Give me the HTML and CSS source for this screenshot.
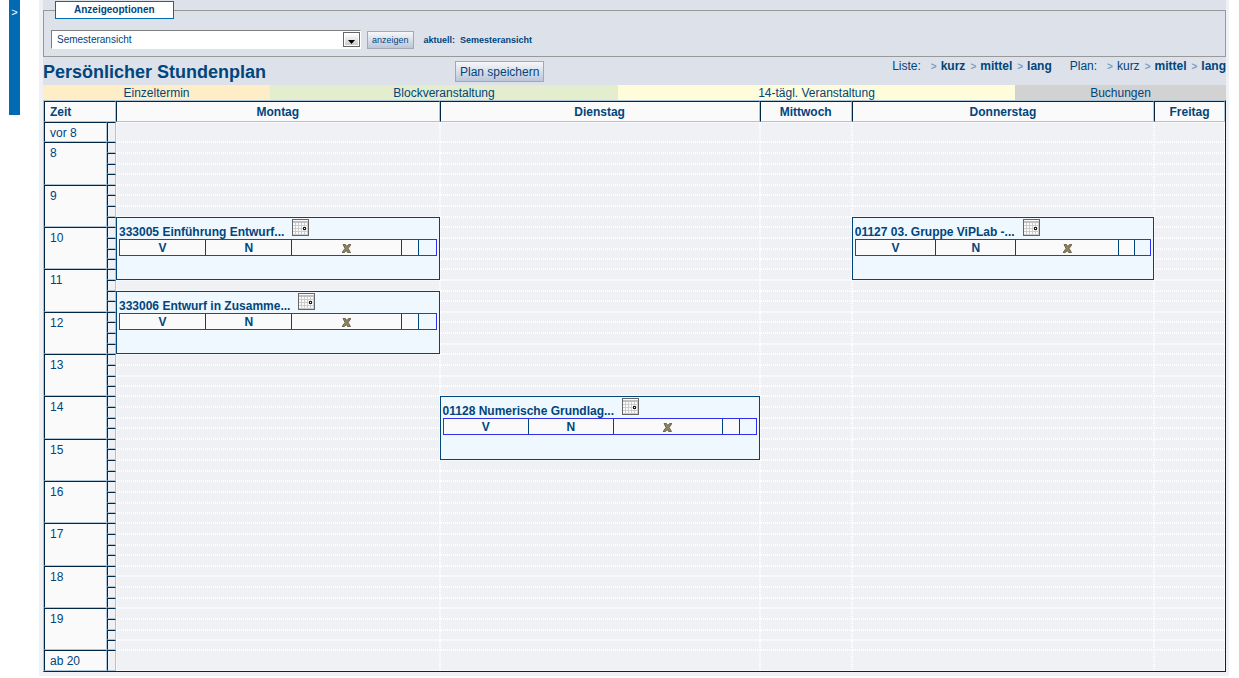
FILE: index.html
```
<!DOCTYPE html>
<html lang="de">
<head>
<meta charset="utf-8">
<title>Persönlicher Stundenplan</title>
<link rel="stylesheet" href="styles.css">
</head>
<body>
<svg class="defs" aria-hidden="true">
<symbol id="cal" viewBox="0 0 17 17"><rect x=".5" y=".5" width="16" height="16" fill="#fafafa" stroke="#666"/><path d="M1 3h15" stroke="#8c8488"/><path d="M3.500 4v12M6.500 4v12M9.500 4v12M12.500 4v12M15.500 4v12M1 6.500h15M1 9.500h15M1 12.500h15M1 15.500h15" stroke="#ccc"/><rect x="11.500" y="8.500" width="2" height="2" fill="#fff" stroke="#222"/></symbol>
<symbol id="del" viewBox="0 0 9 9"><path d="M1 .5h2.500l1.300 2L6.500 .5H9L6.200 4.500 8.500 8.500H5.500L4.300 6.500 2.500 8.500H0L3 4.500z" fill="#8f8462" stroke="#5c553f" stroke-width=".8"/></symbol>
</svg>
<div class="page">
<button class="sidebar" type="button" aria-label="Menü einblenden">&gt;</button>
<main class="content">
<div class="panel">
<form>
<fieldset class="options">
<legend>Anzeigeoptionen</legend>
<div class="options-row">
<span class="select"><select aria-label="Ansicht"><option>Semesteransicht</option></select><svg class="arrow" viewBox="0 0 17 15" aria-hidden="true"><defs><linearGradient id="g" x2="0" y2="1"><stop stop-color="#fff"/><stop offset="1" stop-color="#ccc"/></linearGradient></defs><rect x=".5" y=".5" width="16" height="14" fill="#fff" stroke="#666"/><rect x="2" y="2" width="13" height="11" fill="url(#g)"/><path d="M5 8h7l-3.500 4z" fill="#000"/></svg></span>
<button class="btn small" type="button">anzeigen</button>
<strong class="current">aktuell: &nbsp;Semesteransicht</strong>
</div>
</fieldset>
</form>
<div class="titlebar">
<h1>Persönlicher Stundenplan</h1>
<div><button class="btn" type="button">Plan speichern</button></div>
<nav class="views">
<div class="view-group"><span class="view-label">Liste:</span><a class="on" href="#">kurz</a><a class="on" href="#">mittel</a><a class="on" href="#">lang</a></div>
<div class="view-group"><span class="view-label">Plan:</span><a href="#">kurz</a><a class="on" href="#">mittel</a><a class="on" href="#">lang</a></div>
</nav>
</div>
<ul class="key">
<li class="single">Einzeltermin</li>
<li class="block">Blockveranstaltung</li>
<li class="biweekly">14-tägl. Veranstaltung</li>
<li class="booking">Buchungen</li>
</ul>
</div>
<table class="plan">
<colgroup><col class="c-hour"><col class="c-tick"><col class="c-mo"><col class="c-di"><col class="c-mi"><col class="c-do"><col></colgroup>
<thead><tr><th class="time" colspan="2">Zeit</th><th>Montag</th><th>Dienstag</th><th>Mittwoch</th><th>Donnerstag</th><th>Freitag</th></tr></thead>
<tbody>
<tr class="edge"><th class="hour">vor 8</th><td class="tick"></td><td></td><td></td><td></td><td></td><td></td></tr>
<tr><th class="hour" rowspan="4">8</th><td class="tick"></td><td></td><td></td><td></td><td></td><td></td></tr>
<tr><td class="tick"></td><td></td><td></td><td></td><td></td><td></td></tr>
<tr><td class="tick"></td><td></td><td></td><td></td><td></td><td></td></tr>
<tr><td class="tick"></td><td></td><td></td><td></td><td></td><td></td></tr>
<tr><th class="hour" rowspan="4">9</th><td class="tick"></td><td></td><td></td><td></td><td></td><td></td></tr>
<tr><td class="tick"></td><td></td><td></td><td></td><td></td><td></td></tr>
<tr><td class="tick"></td><td></td><td></td><td></td><td></td><td></td></tr>
<tr><td class="tick"></td>
<td class="event" rowspan="6"><div class="event-title"><a href="#">333005 Einführung Entwurf...</a><svg class="cal"><use href="#cal"/></svg></div><table class="actions"><tr><td><a href="#">V</a></td><td><a href="#">N</a></td><td class="wide"><a href="#" aria-label="Löschen"><svg class="del"><use href="#del"/></svg></a></td><td class="slot"></td><td class="last"></td></tr></table></td>
<td></td><td></td>
<td class="event" rowspan="6"><div class="event-title"><a href="#">01127 03. Gruppe ViPLab -...</a><svg class="cal"><use href="#cal"/></svg></div><table class="actions"><tr><td><a href="#">V</a></td><td><a href="#">N</a></td><td class="wide"><a href="#" aria-label="Löschen"><svg class="del"><use href="#del"/></svg></a></td><td class="slot"></td><td class="last"></td></tr></table></td>
<td></td></tr>
<tr><th class="hour" rowspan="4">10</th><td class="tick"></td><td></td><td></td><td></td></tr>
<tr><td class="tick"></td><td></td><td></td><td></td></tr>
<tr><td class="tick"></td><td></td><td></td><td></td></tr>
<tr><td class="tick"></td><td></td><td></td><td></td></tr>
<tr><th class="hour" rowspan="4">11</th><td class="tick"></td><td></td><td></td><td></td></tr>
<tr><td class="tick"></td><td></td><td></td><td></td><td></td><td></td></tr>
<tr><td class="tick"></td>
<td class="event" rowspan="6"><div class="event-title"><a href="#">333006 Entwurf in Zusamme...</a><svg class="cal"><use href="#cal"/></svg></div><table class="actions"><tr><td><a href="#">V</a></td><td><a href="#">N</a></td><td class="wide"><a href="#" aria-label="Löschen"><svg class="del"><use href="#del"/></svg></a></td><td class="slot"></td><td class="last"></td></tr></table></td>
<td></td><td></td><td></td><td></td></tr>
<tr><td class="tick"></td><td></td><td></td><td></td><td></td></tr>
<tr><th class="hour" rowspan="4">12</th><td class="tick"></td><td></td><td></td><td></td><td></td></tr>
<tr><td class="tick"></td><td></td><td></td><td></td><td></td></tr>
<tr><td class="tick"></td><td></td><td></td><td></td><td></td></tr>
<tr><td class="tick"></td><td></td><td></td><td></td><td></td></tr>
<tr><th class="hour" rowspan="4">13</th><td class="tick"></td><td></td><td></td><td></td><td></td><td></td></tr>
<tr><td class="tick"></td><td></td><td></td><td></td><td></td><td></td></tr>
<tr><td class="tick"></td><td></td><td></td><td></td><td></td><td></td></tr>
<tr><td class="tick"></td><td></td><td></td><td></td><td></td><td></td></tr>
<tr><th class="hour" rowspan="4">14</th><td class="tick"></td><td></td>
<td class="event" rowspan="6"><div class="event-title"><a href="#">01128 Numerische Grundlag...</a><svg class="cal"><use href="#cal"/></svg></div><table class="actions"><tr><td><a href="#">V</a></td><td><a href="#">N</a></td><td class="wide"><a href="#" aria-label="Löschen"><svg class="del"><use href="#del"/></svg></a></td><td class="slot"></td><td class="last"></td></tr></table></td>
<td></td><td></td><td></td></tr>
<tr><td class="tick"></td><td></td><td></td><td></td><td></td></tr>
<tr><td class="tick"></td><td></td><td></td><td></td><td></td></tr>
<tr><td class="tick"></td><td></td><td></td><td></td><td></td></tr>
<tr><th class="hour" rowspan="4">15</th><td class="tick"></td><td></td><td></td><td></td><td></td></tr>
<tr><td class="tick"></td><td></td><td></td><td></td><td></td></tr>
<tr><td class="tick"></td><td></td><td></td><td></td><td></td><td></td></tr>
<tr><td class="tick"></td><td></td><td></td><td></td><td></td><td></td></tr>
<tr><th class="hour" rowspan="4">16</th><td class="tick"></td><td></td><td></td><td></td><td></td><td></td></tr>
<tr><td class="tick"></td><td></td><td></td><td></td><td></td><td></td></tr>
<tr><td class="tick"></td><td></td><td></td><td></td><td></td><td></td></tr>
<tr><td class="tick"></td><td></td><td></td><td></td><td></td><td></td></tr>
<tr><th class="hour" rowspan="4">17</th><td class="tick"></td><td></td><td></td><td></td><td></td><td></td></tr>
<tr><td class="tick"></td><td></td><td></td><td></td><td></td><td></td></tr>
<tr><td class="tick"></td><td></td><td></td><td></td><td></td><td></td></tr>
<tr><td class="tick"></td><td></td><td></td><td></td><td></td><td></td></tr>
<tr><th class="hour" rowspan="4">18</th><td class="tick"></td><td></td><td></td><td></td><td></td><td></td></tr>
<tr><td class="tick"></td><td></td><td></td><td></td><td></td><td></td></tr>
<tr><td class="tick"></td><td></td><td></td><td></td><td></td><td></td></tr>
<tr><td class="tick"></td><td></td><td></td><td></td><td></td><td></td></tr>
<tr><th class="hour" rowspan="4">19</th><td class="tick"></td><td></td><td></td><td></td><td></td><td></td></tr>
<tr><td class="tick"></td><td></td><td></td><td></td><td></td><td></td></tr>
<tr><td class="tick"></td><td></td><td></td><td></td><td></td><td></td></tr>
<tr><td class="tick"></td><td></td><td></td><td></td><td></td><td></td></tr>
<tr class="edge late"><th class="hour">ab 20</th><td class="tick"></td><td></td><td></td><td></td><td></td><td></td></tr>
</tbody>
</table>
</main>
</div>
</body>
</html>
```
FILE: styles.css
```
* { box-sizing: border-box; }
body { margin: 0; background: #fff; color: #00457c; font: 12px/14px "Liberation Sans", Arial, sans-serif; }
a { color: #00457c; text-decoration: none; }
.defs { position: absolute; width: 0; height: 0; }

.page { display: flex; align-items: flex-start; gap: 19px; padding: 0 10px 0 9px; }
.sidebar { flex: none; display: flex; justify-content: center; width: 11px; height: 115px; padding: 5px 0 0; border: 0; background: #006ab3; color: #fff; font: 11px/14px "Liberation Sans", Arial, sans-serif; }
.content { flex: 1; min-width: 0; padding: 0 3px 4px 4px; background: #f0f1f5; }
.panel { padding-top: 1px; background: #dde1ea; }

.options { margin: 0; padding: 11px 7px 7px; border: 1px solid #999; min-width: 0; }
.options legend { margin-left: 4px; padding: 0 18px; border: 1px solid #006ab3; background: #fff; font-size: 10px; line-height: 16px; font-weight: bold; }
.options-row { display: flex; align-items: center; gap: 6px; font-size: 10px; }
.select { position: relative; display: flex; width: 310px; }
.select select { appearance: none; width: 100%; height: 19px; padding: 0 20px 0 5px; border: 1px solid #fff; border-top-color: #808080; border-left-color: #808080; border-radius: 0; background: #fff; color: #00457c; font: 10px/16px "Liberation Sans", Arial, sans-serif; }
.arrow { position: absolute; top: 2px; right: 1px; width: 17px; height: 15px; pointer-events: none; }
.current { margin-left: 4px; font-size: 9px; }
.btn { height: 21px; padding: 0 4px; border: 1px solid #a5a8ae; border-radius: 0; background: linear-gradient(#f6f7f9, #bcc6d9); color: #00457c; font: 12px/18px "Liberation Sans", Arial, sans-serif; }
.btn.small { height: 18px; padding: 0 4px; font-size: 9px; line-height: 16px; }

.titlebar { display: grid; grid-template-columns: 412px 1fr auto; height: 28px; padding-top: 4px; }
h1 { margin: 0; font-size: 18px; line-height: 22px; }
.views { display: flex; gap: 18px; line-height: 10px; }
.view-group { display: flex; }
.view-label { margin-right: 5px; }
.view-group a { margin-left: 5px; }
.view-group a::before { content: ">"; margin-right: 4px; color: #7f9fbf; font-size: 10px; font-weight: bold; }
.on { font-weight: bold; }

.key { display: grid; grid-template-columns: 227fr 348fr 397fr 211fr; margin: 0; padding: 0; list-style: none; text-align: center; }
.key li { padding-top: 1px; }
.single { background: #ffedc8; }
.block { background: #e4edce; }
.biweekly { background: #fffcdc; }
.booking { background: #d2d2d2; }

.plan { width: 100%; table-layout: fixed; border-collapse: separate; border-spacing: 0; border: 1px solid #002846; border-top-color: #adc5d6; border-left-color: #adc5d6; }
.c-hour { width: 63px; }
.c-tick { width: 9px; }
.c-mo { width: 27.4%; }
.c-di { width: 27.1%; }
.c-mi { width: 7.8%; }
.c-do { width: 25.6%; }
.plan td { padding: 0; border: 1px dotted #fff; }
.plan thead th { height: 21px; padding: 0; line-height: 18px; }
.plan th, .plan .tick { border: 1px solid #adc5d6; border-top-color: #002846; border-left-color: #002846; background: #fafafa; }
.plan .tick { background: #f0f1f5; }
.plan thead .time { padding-left: 5px; text-align: left; }
.plan .hour { padding: 3px 5px 0; font-weight: normal; text-align: left; vertical-align: top; }
.plan tbody tr { height: 11px; }
.plan tbody tr:nth-child(12n+4),
.plan tbody tr:nth-child(12n+6),
.plan tbody tr:nth-child(12n+9),
.plan tbody tr:nth-child(12n+12),
.plan tbody tr:nth-child(12n+13) { height: 10px; }
.plan tbody tr.edge { height: 20px; }
.plan tbody tr.late { height: 21px; }

.plan .event { padding: 0 2px; border: 1px solid #00457c; background: #f0f8ff; vertical-align: top; font-weight: bold; }
.event-title { display: flex; align-items: flex-start; gap: 8px; height: 21px; padding-top: 1px; line-height: 26px; white-space: nowrap; }
.cal { flex: none; width: 17px; height: 17px; }
.actions { width: 100%; table-layout: fixed; border-collapse: separate; border-spacing: 0; border: 1px solid #3030f0; text-align: center; line-height: 14px; }
.plan .actions tr { height: 15px; }
.plan .actions td { width: 27.3%; padding-top: 1px; border: 0; border-right: 1px solid #00457c; background: #fafafa; }
.plan .actions .wide { width: 34.8%; }
.plan .actions .slot { width: 5.5%; }
.plan .actions .last { width: 5.1%; border-right: 0; background: #f0f8ff; }
.del { display: block; width: 9px; height: 9px; margin: 1px auto 0; }
```
